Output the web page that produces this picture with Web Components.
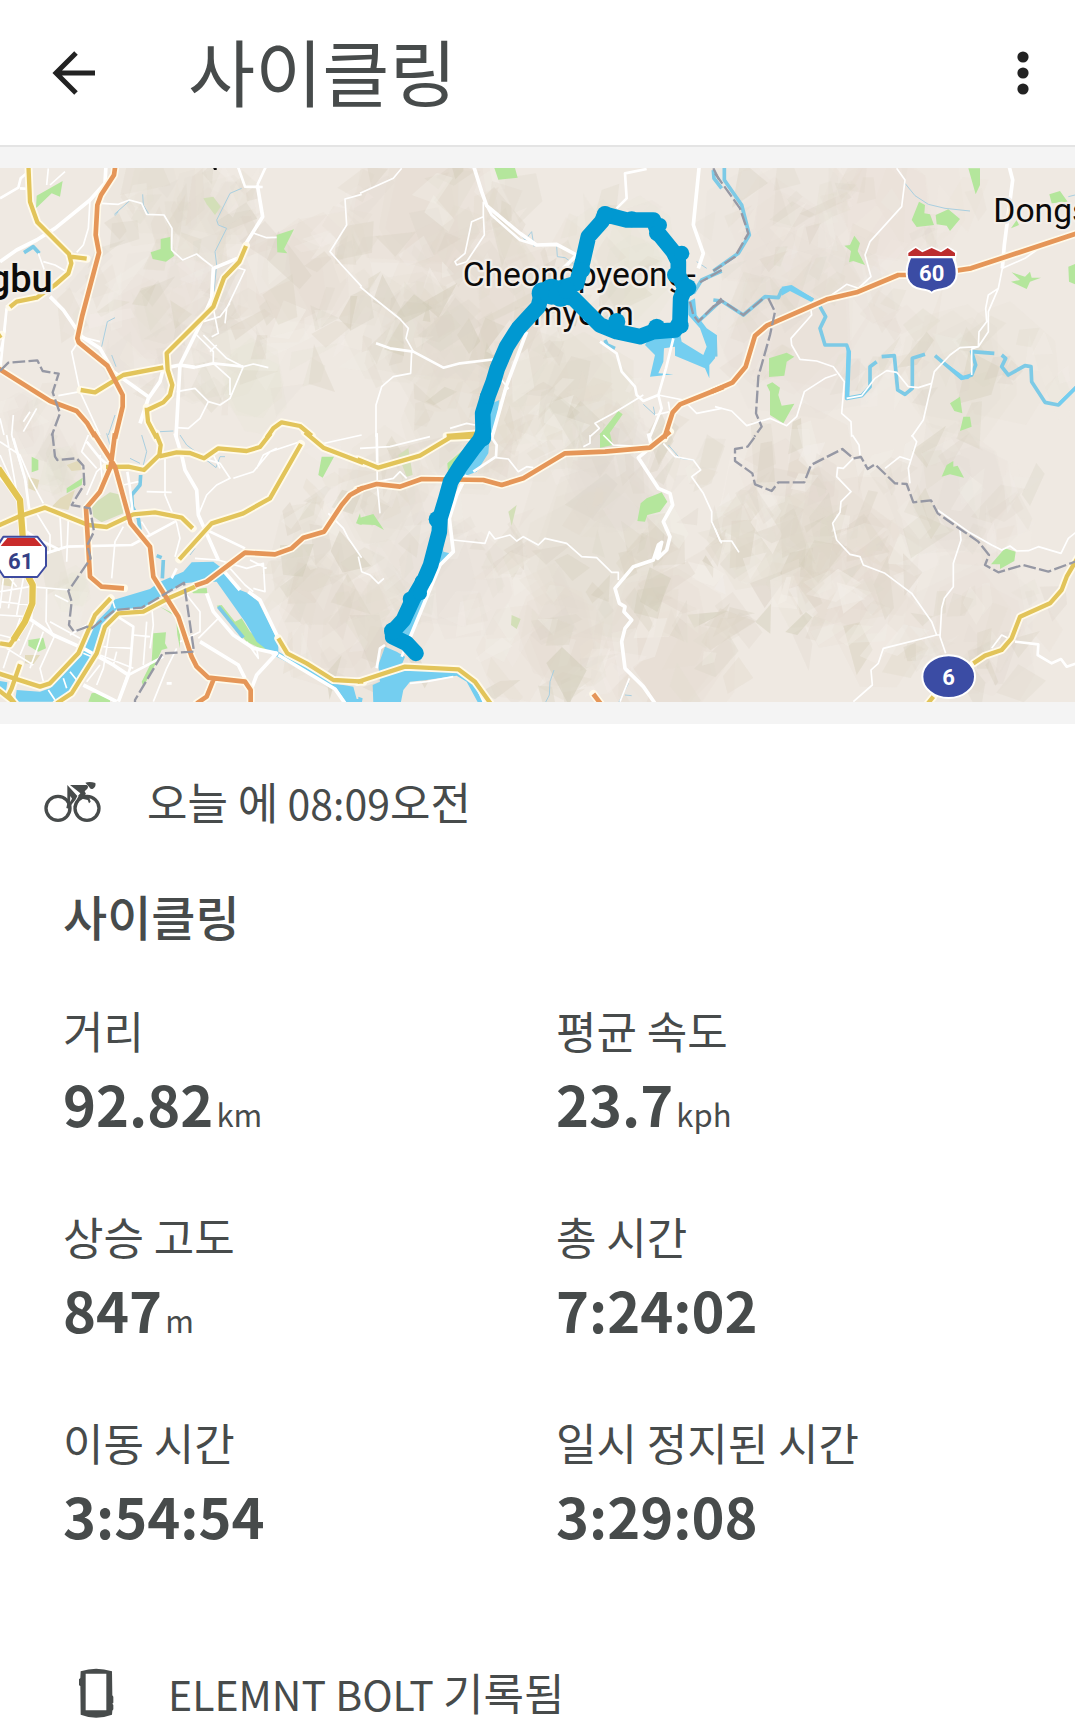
<!DOCTYPE html>
<html lang="ko">
<head>
<meta charset="utf-8">
<meta name="viewport" content="width=device-width, initial-scale=1">
<title>사이클링</title>
<style>
    body {
        margin: 0;
        background: #fff;
        color: #474b4b;
        font-family: "Noto Sans CJK KR", sans-serif;
        /* keeps the colon of a time on the baseline */
        font-feature-settings: "calt" 0, "ccmp" 0, "locl" 0, "liga" 0, "clig" 0;
    }
</style>
</head>
<body>
<workout-screen></workout-screen>

<script>
class AppHeader extends HTMLElement {
    constructor() {
        super();
        this.attachShadow({ mode: 'open' });
        this.shadowRoot.innerHTML = `
    <style>
        :host {
            display: flex;
            align-items: center;
            padding: 18px 31px 17px 44px;
            border-bottom: 2px solid #e4e4e4;
            background: #fff;
        }
        button {
            display: flex;
            padding: 0;
            border: 0;
            background: none;
            color: #222;
            cursor: pointer;
        }
        h1 {
            flex: 1;
            margin: 0 0 0 84px;
            padding-bottom: 8px;
            font-size: 73px;
            line-height: 102px;
            font-weight: 400;
        }
    </style>
    <button class="back" aria-label="뒤로">
        <svg width="60" height="60" viewBox="0 0 60 60" fill="none" stroke="currentColor" stroke-width="5">
            <path d="M51 30H13M32 10L12 30L32 50"/>
        </svg>
    </button>
    <h1><slot></slot></h1>
    <button class="menu" aria-label="더보기">
        <svg width="42" height="60" viewBox="0 0 42 60" fill="currentColor">
            <circle cx="21" cy="14" r="5.6"/><circle cx="21" cy="30" r="5.6"/><circle cx="21" cy="46" r="5.6"/>
        </svg>
    </button>`;
    }
}

// Map sheets, 3 units per pixel. Each sheet has its own origin, layers are drawn across all sheets.
const sheets = [
    {
        at: [0, 495],
        green: 'M108 130L110 92L188 48L180 95L155 85ZM452 262L482 252L482 222L510 216L512 250L523 272L498 290L458 282ZM830 210L882 193L852 252L862 265L832 262Z',
        moss: 'M610 100L640 95L662 125L645 150L620 118Z',
        stream: 'M428 88L430 120L448 150M345 152L355 140M343 148L388 108M725 70L690 85L650 165L655 180L680 190L645 260L650 300L642 380M345 458L322 470L305 545M335 570L348 605M480 800L520 798M345 750L325 810',
        river: 'M72 263L100 245L118 265',
        thin: 'M305 115L355 118L388 105L425 115L440 148L492 150L516 190L515 255L548 285L590 267L612 285L638 305M762 205L800 218L830 217M705 305L735 315L680 430L675 475M690 415L660 455L610 470M245 515L215 560L240 680L300 810M730 605L690 700L660 720L625 710L585 670L530 680M625 710L600 760L565 790L530 788M590 510L640 560L640 595M610 510L680 580L730 605M730 605L760 597L805 608M640 595L690 640L690 690M640 430L655 505L635 515M1085 88L1035 102L1040 180L990 260L1025 300L1085 365M20 420L15 500L0 560M270 105L265 190L250 240L230 262M115 265L135 320M130 290L165 300L200 320M145 10L140 60M195 20L150 60M240 515L300 530M175 692L240 680M40 750L35 810M110 730L70 800M0 760L12 810M90 740L70 770M630 560L650 540',
        road: 'M0 100L55 68L62 40L80 25M60 70L88 72M712 0L735 65L788 66M585 607L640 595L730 605M800 0L772 60M0 620L10 520L20 430',
        wide: 'M318 0L315 55L270 105L165 190L110 225L50 255L0 290M772 60L788 155L735 240M712 280L640 310L635 400L600 480L540 600L528 815M490 610L540 600L585 607M490 610L480 650L445 700L420 775M150 395L190 435L245 515L300 550L340 620L445 695',
        yellow: 'M85 -5L90 110L112 172L207 267L214 295L205 325L165 360L110 398L50 410L30 426M212 275L260 281M738 243L718 290L672 338L640 425L500 565L503 615L517 660L510 690L490 712L442 735M440 728L444 770L470 820M490 607L370 630L285 682L242 675M800 818L820 790L845 772L900 783L935 812M-4 515L4 510',
        orange: 'M347 -5L342 30L303 90L292 120L287 210L297 263L246 455L232 520L236 532L322 602L368 690L368 725L345 820M-5 610L150 708L230 738L262 775L285 815',
        border: 'M0 618L25 593L112 586L128 618L176 626L158 682L180 745L155 812'
    },
    {
        at: [1080, 495],
        green: 'M403 9L465 9L473 38L415 44ZM775 738L788 748L745 810L718 810Z',
        water: 'M985 410L1005 400L1010 450L1040 490L1070 510L1065 580L1048 600L1048 640L1035 610L945 572L945 545L912 550L910 590L895 625L940 628L870 635L885 570L855 540L870 515L960 505L965 530L1030 570L1040 545L1020 490L985 450ZM385 720L418 705L402 815L370 815Z',
        stream: 'M480 205L495 225L515 200L522 245M590 245L592 275L615 278L660 310M850 718L885 750L880 725M1010 290L1040 310',
        river: 'M735 525L742 540L765 550M1085 318L1025 345L1000 385M1085 405L1020 465M1060 15L1062 40L1085 70',
        thin: 'M125 10L100 40L60 58L0 85M370 110L370 150L373 210L320 290L290 300L285 290L315 265L335 170L370 155M155 560L152 625L100 635L65 665L48 720L48 815M895 690L970 705L1010 745L1085 730M850 690L760 745L705 775L718 790L690 815M0 365L30 390L120 462L145 490L138 520L160 560M420 640L445 670L430 680M925 710L930 740L885 750M270 790L320 775L345 780',
        road: 'M860 12L795 25L800 100L770 130M48 535L90 550L160 560L250 608L300 595L410 582M720 530L770 565L785 620L825 665L830 690L850 708L895 690L905 730L870 815M940 520L918 610L895 690M380 122L395 150L480 225L530 240',
        wide: 'M340 0L365 80L380 122L480 205L530 240L590 238L650 270L610 310M1018 0L1000 180L1030 265L1015 310M500 500L440 660L395 820',
        orange: 'M1090 666L960 718L938 742L913 820',
        yellow: 'M260 813L355 805',
        border: 'M1060 10L1075 40L1085 50M1085 315L1020 352M990 410L1000 450L1015 470L1085 400',
        route: 'M370 820L368 745L385 690L400 650L412 610L440 545L475 490L535 425L545 385L600 370L650 355L668 290L685 215L725 170L735 148L800 165L880 165L895 205L940 260L955 290L955 330L975 370L962 400L960 470L945 495L880 500L840 515L770 500L720 480L640 400L580 385',
        blobs: [[900, 180, 20], [770, 470, 25], [965, 265, 22], [548, 385, 32], [575, 380, 38], [602, 388, 36], [982, 368, 26], [962, 482, 23], [890, 487, 25], [890, 205, 22], [735, 148, 24], [620, 375, 26], [668, 315, 22], [945, 330, 23], [815, 163, 23], [380, 695, 20]]
    },
    {
        at: [2145, 495],
        green: 'M760 10L795 10L795 60L782 88ZM590 165L612 110L630 120L628 145L645 148L657 180L605 186ZM662 150L700 133L735 162L705 198L695 182L665 178ZM388 242L405 240L418 212L435 235L428 258L450 300L415 288L402 292L408 258ZM1003 88L1035 78L1058 110L1010 115ZM888 190L905 165L912 180ZM888 350L915 345L890 322L930 335L945 320L950 338L978 338L945 350L935 372ZM1060 305L1085 295L1085 360L1062 350ZM162 580L215 563L238 575L215 590L208 632L162 636ZM155 660L172 652L195 668L190 690L200 722L238 716L205 775L165 750L165 680ZM705 715L735 695L742 745L718 738ZM745 755L765 755L770 785L735 798Z',
        stream: 'M570 55L600 92L640 118L690 130L765 138M1060 95L1080 90',
        river: 'M-5 405L20 408L85 450L150 395L190 398L200 375L225 368L295 405M28 5L28 45L80 120L103 210L70 265L-5 318M315 425L332 455L315 490L330 540L395 540L402 560L395 700L440 692L465 665L465 605L485 590M500 575L538 572L548 675L570 688L592 670L592 580L630 568M660 572L740 640L770 630L782 600L770 560L838 565M860 570L872 580L860 605L880 630L930 602L948 605L950 650L990 712L1030 720L1085 665M0 510L2 575',
        water: 'M200 365L230 360L295 400L290 412L225 378L200 392ZM690 592L745 632L770 630L760 642L738 644ZM1030 712L1085 660L1085 672L1035 722ZM395 540L408 560L403 700L390 700Z',
        thin: 'M545 10L570 45L560 125L465 230L450 270L468 335L430 370L395 358L350 390M850 370L820 440L820 500L790 545L735 548L705 570L658 620L625 765L590 815M862 310L930 280L965 255M850 370L820 390L812 430L815 470L792 500L790 545L770 552L770 630M288 435L290 450L228 520L230 540L255 583L305 588L355 605L388 650L380 745L408 770L410 815M365 628L330 640L268 680L245 755L215 782L165 760L95 782L50 738L0 725M395 700L440 692L480 640L515 617L545 622L580 665L610 668L650 655M868 240L862 310L850 370',
        wide: 'M880 -5L893 45L868 240L862 310',
        orange: 'M-10 680L52 653L92 605L120 512L155 482L335 403L425 382L550 330L575 330M728 316L768 310L1095 202',
        border: 'M0 25L75 130L100 205L60 275L-5 318M-5 425L22 408L85 450L148 398M160 400L180 440L165 510L130 635L123 745L140 785L118 815'
    },
    {
        at: [0, 1305],
        green: 'M460 595L498 592L495 625L503 640L485 645L465 690L430 755L425 740L455 680ZM85 615L130 608L138 640L115 650L85 632ZM265 800L275 775L300 770L330 790L330 805ZM650 512L665 510L705 560L725 550L750 590L805 640L800 650L740 620ZM570 465L620 458L622 475L580 475ZM95 65L115 75L115 105L95 112ZM200 160L248 128L245 150L200 175ZM955 120L965 65L1002 65L968 128ZM1068 265L1080 235L1085 270ZM480 515L530 540L540 600L540 640L532 600L528 545Z',
        moss: 'M275 210L330 172L365 180L370 235L305 262L280 245Z',
        sand: 'M155 215L180 190L225 165L205 225ZM85 125L118 135L110 170L85 160ZM75 660L120 660L100 688L75 685ZM200 90L240 75L245 105L215 108ZM5 430L40 430L40 455L5 450Z',
        water: 'M340 495L450 462L480 440L550 410L575 382L640 380L660 395L720 465L745 475L775 500L835 620L835 650L1000 745L1060 755L1070 792L1085 792L1085 805L1040 805L1010 760L820 660L770 620L735 560L650 440L600 440L550 445L480 485L430 520L345 530L300 590L290 650L210 765L165 800L45 800L50 765L120 770L150 760L240 665L270 590L290 560L330 520ZM0 738L22 742L18 770L0 760Z',
        river: 'M422 120L420 150L395 180L397 215L415 250L420 285M490 375L487 430M655 515L730 608M470 362L485 368',
        stream: 'M320 -5L330 30M425 0L440 50L430 90M390 70L420 85M540 0L560 30L600 60L648 98L660 65L675 65M585 340L570 360M70 770L100 795',
        thin: 'M130 355L200 335M370 275L345 320L335 430M525 365L540 310L530 265L495 180L495 70M440 170L515 172M425 260L450 300M595 240L620 180L650 150L690 130L660 85L610 70M0 20L60 60L90 130L130 205M20 0L50 170M35 0L80 150M0 60L40 150M75 225L80 300M205 250L200 380M180 240L185 340M110 235L150 300L150 350M335 70L290 110L260 180M265 0L245 50L290 100M0 470L90 455L210 465M0 500L90 510M0 540L80 545M10 430L0 520M40 430L25 520M70 430L50 540M140 460L138 560L160 600M60 550L30 640L10 700M100 565L60 660M130 590L90 700M165 600L120 700L130 740M0 600L60 615M310 635L395 640M330 580L310 700L290 750M440 560L430 690M400 600L450 605M655 550L595 610M530 640L500 700L460 800M585 370L655 375L740 400L790 385L795 470L760 460M690 400L735 450L760 470M750 375L800 400M985 235L1030 280L1045 310L1085 368M560 480L600 530L600 590L540 620M700 130L760 110L810 50L900 20M770 100L790 60L830 40M300 660L400 700M350 650L340 690M455 510L460 570L450 640M370 150L415 140M0 390L50 455M210 600L260 570M150 560L240 610M20 640L100 690M740 620L775 670L770 640M950 30L1085 0M0 130L60 190M100 470L95 550M165 480L205 500M660 100L640 60M260 740L300 690M310 170L300 60',
        road: 'M382 110L390 160L400 250M620 285L735 340M140 355L200 335L395 330L525 260M80 290L110 310L180 345M345 540L400 575L390 700L370 760M40 10L75 130L90 240M260 20L300 70L335 100M530 400L515 430M500 745L515 745M385 720L490 665',
        wide: 'M525 -5L545 60L555 105L590 165L595 240L655 375M250 750L350 800M600 620L715 690L735 730M620 475L640 530L700 600L760 640L830 655L770 720L755 760M80 545L160 600L250 640L340 690L385 720L355 800M660 395L720 465M745 470L780 495L835 610M835 660L1005 762L1035 805',
        bridges: 'M335 490L345 520M250 655L275 665M190 730L200 760M210 710L230 735M145 765L165 795M815 660L830 650',
        yellow: 'M-5 100L60 195L68 305M85 425L98 450L97 505L75 560L30 630L0 625M-5 272L55 245L135 218L265 270L320 276L400 238L465 232L545 248L578 280M468 -5L482 30L478 60L432 105L385 95L318 96M478 64L530 52L570 54L612 70L655 40L740 48L780 36L812 -5M915 -8L970 38L1090 84M903 27L810 190L730 235L635 265L538 373M332 490L285 540L235 655L150 745L120 755L-5 715M170 805L215 775L290 655L315 575L355 535L430 530L505 490L585 455M60 688L35 760L25 780L45 805M-5 765L40 800M835 610L862 655L920 685L1000 735L1090 740',
        heavy: 'M-5 100L60 195L68 305M85 425L98 450L97 505L75 560L40 615',
        orange: 'M280 -8L330 70L345 95L392 265L450 335L460 425L535 545L575 665L590 695L625 728L735 740L752 765L752 805M345 -5L332 95L300 170L258 220L270 425L305 455L372 460M585 452L620 440L735 353L825 358L875 340L910 308L972 290L1025 210L1050 180L1090 158M640 735L620 785L590 805',
        border: 'M157 -5L165 65L172 75L230 70L250 92L253 148L215 210L270 220L282 290L262 330L272 370L205 468L215 500L207 570L222 590L262 575L275 580L345 525L425 518L552 443L582 650L488 655L405 795L405 805'
    },
    {
        at: [1080, 1305],
        green: 'M262 85L315 40L265 125ZM832 258L842 205L860 190L905 172L922 200L900 230L862 240L855 260ZM-5 250L40 237L72 285L45 270L-5 268ZM720 -5L750 -5L758 30L720 38Z',
        moss: 'M445 230L470 210L455 272ZM455 540L482 552L470 582L453 570ZM115 60L145 40L158 120L140 125Z',
        water: 'M390 -5L385 55L350 110L310 125L300 100ZM240 290L250 350L270 355L240 390L150 615L110 600L200 430ZM75 635L110 650L135 665L125 690L150 700L300 705L345 735L370 805L355 805L320 740L290 722L200 735L150 740L130 765L122 805L40 805L38 750L60 740L55 690ZM-5 785L8 790L5 805L-5 805Z',
        stream: 'M582 705L570 740L568 780L555 805M805 745L775 805M795 780L815 782M925 30L960 70L1000 75',
        thin: 'M55 140L100 130L120 110L140 130M0 40L90 35L210 5M50 -5L52 150L60 235M408 68L445 72L475 110L500 95L520 98M280 315L375 325L388 290L405 312L450 300L470 318L490 305L535 330L555 310L620 325L665 365L710 368L755 412L775 412L775 435M730 0L760 30L850 35M690 0L690 25L670 35M910 25L945 65L1000 75L1022 105L995 125L1030 175L1055 230L1055 260L1085 325M-5 365L5 410L30 420L55 445L72 430M150 745L200 740L280 725M808 730L780 800',
        road: 'M390 0L410 30L408 65L340 110M50 -5L52 100M50 700L60 640L75 630M125 665L145 615',
        wide: 'M320 120L290 180L268 250L280 350L240 390L145 620M865 -5L875 35L835 68L895 160L930 175L938 210L910 260L930 305L920 345L893 370L905 322L895 330L880 375L820 395L765 460L778 505L795 515L792 530L815 555L795 580L785 620L795 700L850 755L885 805M345 740L375 805',
        yellow: 'M-8 73L55 98L180 62L270 8L345 5M-8 741L135 695L295 703L345 740L395 810',
        orange: 'M-8 164L50 147L120 155L185 132L370 135L425 150L490 130L615 55L735 50L870 38L930 -10M700 777L725 810',
        route: 'M370 -10L360 15L340 40L300 95L272 140L258 190L240 250L238 290L212 390L195 430L160 490L130 555L98 590L98 605L140 625L168 655',
        blobs: [[232, 253, 25], [150, 492, 21], [186, 440, 21], [98, 588, 25], [180, 475, 20]]
    },
    {
        at: [2145, 1305],
        green: 'M680 125L695 90L715 78L715 95L728 92L747 128L705 118ZM828 388L870 340L902 350L898 378L855 402L855 388Z',
        thin: 'M412 0L432 30L435 60M590 0L605 20L580 100L585 145M415 70L385 100L368 98L365 125L408 170L378 200L375 232L353 265L365 315L405 358L435 365L445 390L510 415L590 475L650 560L665 600L505 640L490 685L468 705L472 750L415 800M510 100L555 65L585 75M735 285L738 315L715 385L715 455L688 490L680 520L675 605L692 655M668 225L760 290L830 330L860 345L885 333L905 348L940 347L970 335L1038 355L1060 310L1085 290M830 640L860 600L880 610M0 280L15 318L50 318L72 352M665 600L675 600',
        road: 'M900 620L970 628L968 660L1010 685L1038 672L1055 695L1085 685',
        yellow: 'M1090 365L1055 425L1040 465L1005 505L915 545L890 610L860 645L810 662L775 685M655 785L635 810',
        border: 'M118 8L98 35L60 42L60 78L112 115L120 148L170 168L190 142L268 142L288 90L382 42L415 70L438 66L458 102L480 88L540 145L575 147L595 202L648 196L668 235L790 320L822 360L810 390L850 412L925 390L1000 410L1085 378'
    }
];

// Hills: x, y, radius x, radius y, strength
const hills = [
    [520, 640, 190, 130, .8], [430, 950, 220, 200, .6], [680, 620, 130, 110, .9], [930, 900, 220, 210, 1],
    [1300, 640, 280, 150, 1], [1500, 900, 330, 190, 1], [1250, 1010, 220, 120, .9], [1680, 1130, 240, 230, 1.1],
    [1480, 1280, 260, 130, .8], [1850, 780, 160, 150, .5], [2350, 680, 230, 150, .6], [2500, 1000, 330, 170, .6],
    [2960, 1120, 240, 130, .8], [2420, 1560, 300, 230, 1], [2330, 1720, 190, 230, 1.1], [2560, 1800, 220, 210, 1],
    [2000, 1950, 290, 140, 1], [1640, 1960, 190, 140, 1], [1060, 1880, 230, 180, 1], [960, 1700, 140, 200, .9],
    [1130, 1440, 180, 130, .8], [1350, 1700, 220, 190, .7], [1830, 1650, 320, 150, .9], [2890, 1480, 230, 190, .7],
    [2950, 1900, 260, 150, .6], [90, 1260, 80, 110, .6], [720, 1120, 150, 130, .5], [180, 1400, 80, 100, .5],
    [620, 860, 120, 140, .6], [2700, 640, 220, 120, .4], [1900, 1380, 220, 120, .7], [200, 1770, 70, 80, .5]
];

// Shaded relief facets, the same on every load
function drawRelief() {
    let seed = 77;
    const rnd = () => (seed = (seed * 16807) % 2147483647) / 2147483647;
    const tones = ['#dcd4c6', '#e2dace', '#cfc9b4', '#f4f0ea', '#dad2c4', '#f3efe9', '#e4ddd1'];
    let out = '';

    const facet = (x, y, size, slim, corners, turn, tone, opacity) => {
        let points = '';
        for (let k = 0; k < corners; k++) {
            const t = (k + rnd() * .7) / corners * 6.283;
            const u = Math.cos(t) * size * slim;
            const v = Math.sin(t) * size;
            points += Math.round(x + u * Math.cos(turn) - v * Math.sin(turn)) + ',' +
                Math.round(y + u * Math.sin(turn) + v * Math.cos(turn)) + ' ';
        }
        out += `<polygon points="${points}" fill="${tone}" opacity="${opacity.toFixed(2)}"/>`;
    };

    for (const [cx, cy, rx, ry, power] of hills) {
        // broad tint first, then the ridges and slopes on top of it
        for (let i = 0; i < 4; i++) {
            facet(cx + (rnd() - .5) * rx, cy + (rnd() - .5) * ry, rx * .8, .8, 7, 0, '#e1dacd', .18 * power);
        }
        const n = Math.round(rx * ry / 1300);
        for (let i = 0; i < n; i++) {
            const a = rnd() * 6.283;
            const d = Math.sqrt(rnd()) * 1.1;
            facet(
                cx + Math.cos(a) * d * rx, cy + Math.sin(a) * d * ry,
                36 + rnd() * 64, .3 + rnd() * .45, rnd() < .3 ? 3 : 4, (rnd() - .3) * 2,
                tones[Math.floor(rnd() * tones.length)], (.2 + rnd() * .3) * power
            );
        }
    }
    return out;
}

class RouteMap extends HTMLElement {
    constructor() {
        super();
        this.attachShadow({ mode: 'open' });
        const layer = (name, cls = name) => sheets.filter(s => s[name]).map(s =>
            `<path class="${cls}" transform="translate(${s.at})" d="${s[name]}"/>`).join('');
        const blobs = sheets.filter(s => s.blobs).map(s => s.blobs.map(([x, y, r]) =>
            `<circle cx="${s.at[0] + x}" cy="${s.at[1] + y}" r="${r + 1}" fill="#0098d1"/>`).join('')).join('');

        this.shadowRoot.innerHTML = `
    <style>
        :host {
            display: block;
            padding: 21px 0 22px;
            background: #f4f4f4;
        }
        svg {
            display: block;
            width: 100%;
            height: auto;
            background: #efe9e2;
        }
        path {
            fill: none;
            stroke-linejoin: round;
        }
        .green { fill: #b4e69c; }
        .moss { fill: #d3dfb8; }
        .sand { fill: #e2dabb; }
        .water { fill: #74cef0; }
        .river { stroke: #7dcae6; stroke-width: 11; }
        .stream { stroke: #a9cfe0; stroke-width: 3; }
        .thin { stroke: #fff; stroke-width: 5; }
        .road { stroke: #fff; stroke-width: 8; }
        .wide { stroke: #fff; stroke-width: 11; }
        .case { stroke: #fffaea; stroke-width: 24; stroke-linecap: round; }
        .yellow { stroke: #e2c45a; stroke-width: 13; }
        .heavy { stroke: #e2c452; stroke-width: 19; }
        .orange { stroke: #e59658; stroke-width: 14; }
        .border { stroke: #9698a4; stroke-width: 7; stroke-dasharray: 38 10; }
        .route { stroke: #0098d1; stroke-width: 47; stroke-linecap: round; }
        text {
            font-family: Roboto, sans-serif;
            font-size: 101px;
            fill: #0b0b0b;
        }
        .place {
            paint-order: stroke;
            stroke: #f3eee8;
            stroke-width: 14;
            stroke-linejoin: round;
        }
        .city { font-size: 114px; font-weight: 500; }
        .shield { font-size: 66px; font-weight: 700; fill: #fff; text-anchor: middle; }
    </style>
    <svg viewBox="0 504 3225 1602" role="img" aria-label="경로 지도">
        <g>${drawRelief()}</g>
        ${layer('moss')}${layer('sand')}${layer('green')}${layer('stream')}${layer('river')}${layer('water')}
        ${layer('thin')}${layer('road')}${layer('wide')}${layer('bridges', 'thin')}
        ${layer('yellow', 'case')}${layer('orange', 'case')}
        ${layer('yellow')}${layer('heavy')}${layer('orange')}
        ${layer('border')}
        <path d="M638 500h12v10h-8z" style="fill:#111"/>
        <text class="place city" x="158" y="875" text-anchor="end">gbu</text>
        <text class="place" x="1388" y="857">Cheongpyeong-</text>
        <text class="place" x="1750" y="975" text-anchor="middle">myeon</text>
        <text class="place" x="2980" y="667">Dongs</text>
        ${layer('route')}${blobs}
        <g transform="translate(2145 495)">
            <path d="M580 262L602 248L622 261L650 248L678 261L698 248L722 262L718 285Q728 310 722 340Q712 368 680 372Q660 374 650 382Q640 374 620 372Q588 368 578 340Q572 310 584 285Z" style="fill:#fff;stroke:#fff;stroke-width:8"/>
            <path d="M580 273L580 264L602 249L622 262L650 249L678 262L698 249L720 264L720 273Z" style="fill:#bc2d2d"/>
            <path d="M588 280H712Q726 312 720 340Q710 366 680 370Q660 372 650 380Q640 372 620 370Q590 366 580 340Q574 312 588 280Z" style="fill:#3b4ca4"/>
            <text class="shield" x="650" y="349">60</text>
        </g>
        <g transform="translate(0 1305)">
            <path d="M10 305H112L138 337V393L112 426H12L-10 393V337Z" style="fill:#fff;stroke:#3d4aa0;stroke-width:6"/>
            <path d="M22 309H104L126 333H2Z" style="fill:#c92b2b"/>
            <text class="shield" x="62" y="401" style="fill:#343f86">61</text>
        </g>
        <g transform="translate(2145 1305)">
            <ellipse cx="701" cy="725" rx="79" ry="64" fill="#3b4ca4" stroke="#fff" stroke-width="6"/>
            <text class="shield" x="701" y="749">6</text>
        </g>
    </svg>`;
    }
}

class IconLine extends HTMLElement {
    constructor() {
        super();
        this.attachShadow({ mode: 'open' });
        this.shadowRoot.innerHTML = `
    <style>
        :host {
            display: flex;
            align-items: center;
            font-size: 44px;
            line-height: 64px;
        }
        ::slotted(svg) {
            flex: none;
        }
        ::slotted(span) {
            font-size: 41px;
        }
    </style>
    <slot name="icon"></slot>
    <div><slot></slot></div>`;
    }
}

class StatItem extends HTMLElement {
    constructor() {
        super();
        this.attachShadow({ mode: 'open' });
        this.shadowRoot.innerHTML = `
    <style>
        :host {
            display: block;
        }
        .label {
            font-size: 44px;
            line-height: 64px;
        }
        .value {
            font-size: 56px;
            line-height: 82px;
            font-weight: 700;
        }
        .unit {
            margin-left: 3px;
            font-size: 31px;
            line-height: 31px;
            font-weight: 400;
        }
    </style>
    <div class="label">${this.getAttribute('label')}</div>
    <div class="value"><slot></slot><span class="unit">${this.getAttribute('unit') || ''}</span></div>`;
    }
}

class WorkoutScreen extends HTMLElement {
    constructor() {
        super();
        this.attachShadow({ mode: 'open' });
        this.shadowRoot.innerHTML = `
    <style>
        :host {
            display: block;
        }
        .when {
            gap: 41px;
            padding: 45px 40px 0;
        }
        h2 {
            margin: 0;
            padding: 45px 63px 0;
            font-size: 48px;
            line-height: 72px;
            font-weight: 500;
        }
        .stats {
            display: grid;
            grid-template-columns: 1fr 1fr;
            row-gap: 60px;
            padding: 47px 26px 0 63px;
        }
        .device {
            gap: 52px;
            padding: 104px 76px 8px;
        }
    </style>
    <app-header>사이클링</app-header>
    <route-map></route-map>
    <icon-line class="when">
        <svg slot="icon" width="66" height="52" viewBox="0 0 198 156" fill="#474b4b">
            <g fill="none" stroke="#474b4b" stroke-width="10">
                <circle cx="54" cy="97" r="36"/><circle cx="141" cy="97" r="36"/>
            </g>
            <path d="M82 27L112 60L106 72L96 84L88 99L79 96L82 82Z"/>
            <path d="M90 78L96 68L91 60Z" fill="#fff"/>
            <path d="M90 27H140Q147 31 142 38L134 46L138 54L130 61L148 65L152 77L147 82L143 72L120 67L114 60L121 52Z"/>
            <path d="M136 20Q150 16 166 21Q169 32 159 38Q151 41 148 34Z"/>
            <path d="M118 63L104 94" stroke="#474b4b" stroke-width="7"/>
        </svg>
        오늘 에<span> 08:09</span>오전
    </icon-line>
    <h2>사이클링</h2>
    <div class="stats">
        <stat-item label="거리" unit="km">92.82</stat-item>
        <stat-item label="평균 속도" unit="kph">23.7</stat-item>
        <stat-item label="상승 고도" unit="m">847</stat-item>
        <stat-item label="총 시간">7:24:02</stat-item>
        <stat-item label="이동 시간">3:54:54</stat-item>
        <stat-item label="일시 정지된 시간">3:29:08</stat-item>
    </div>
    <icon-line class="device">
        <svg slot="icon" width="40" height="54" viewBox="0 0 120 162" fill="#474b4b">
            <path fill-rule="evenodd" d="M14 16Q60 0 108 16L109 88L112 92V110L109 113L112 117V130L109 134L108 146Q60 164 14 146L13 60L9 58V40L13 36ZM29 23V133H91V23Z"/>
        </svg>
        <span>ELEMNT BOLT </span>기록됨
    </icon-line>`;
    }
}

window.customElements.define('app-header', AppHeader);
window.customElements.define('route-map', RouteMap);
window.customElements.define('icon-line', IconLine);
window.customElements.define('stat-item', StatItem);
window.customElements.define('workout-screen', WorkoutScreen);
</script>
</body>
</html>
